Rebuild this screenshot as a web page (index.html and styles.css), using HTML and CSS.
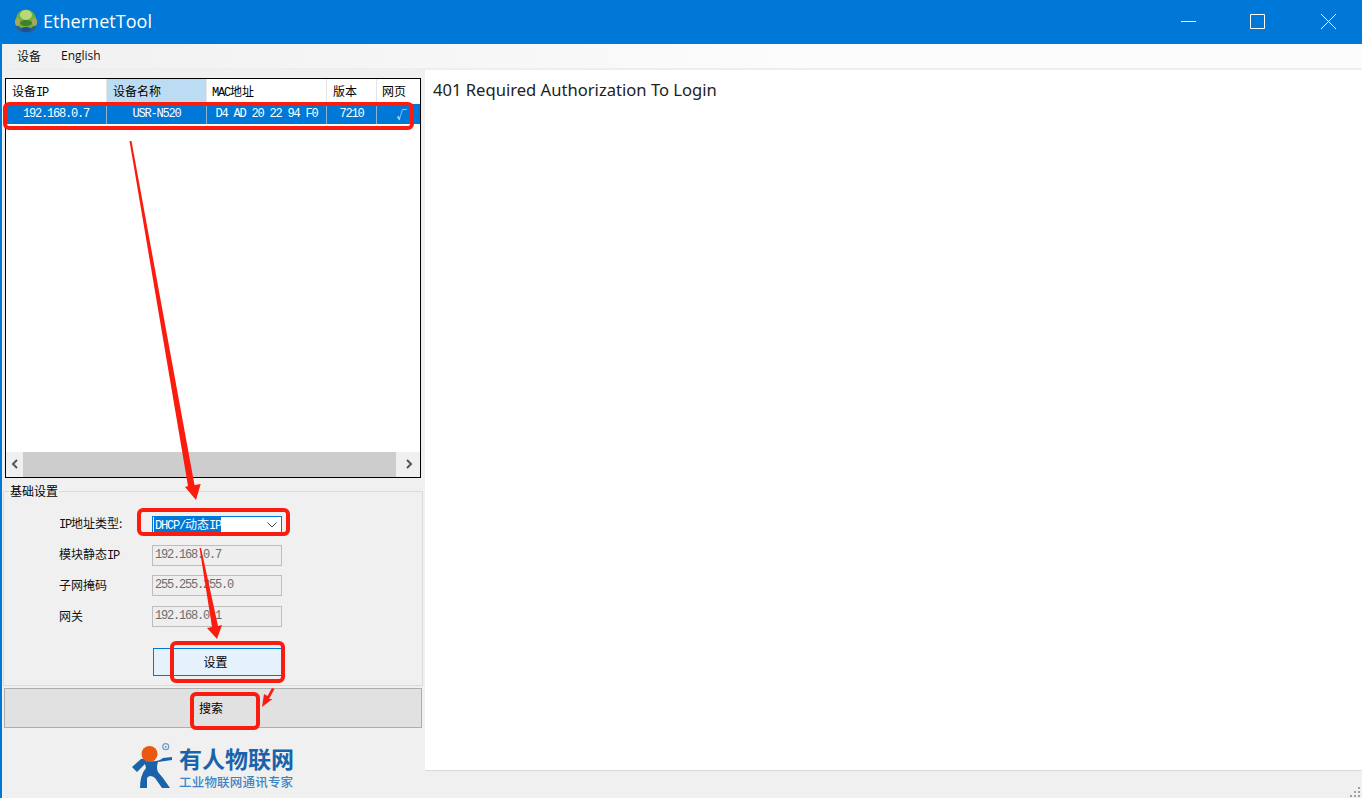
FILE: index.html
```html
<!DOCTYPE html>
<html lang="zh">
<head>
<meta charset="utf-8">
<title>EthernetTool</title>
<link rel="stylesheet" href="styles.css">
</head>
<body>
<div class="app">
  <header class="titlebar">
    <svg class="appicon" viewBox="0 0 24 24" width="24" height="24" aria-hidden="true">
      <ellipse cx="12" cy="18" rx="10" ry="5.5" fill="#2f5f8f"/>
      <circle cx="12" cy="10.5" r="10" fill="#6fae3a"/>
      <ellipse cx="12" cy="6" rx="6" ry="5" fill="#b9d878"/>
      <ellipse cx="12" cy="14" rx="6" ry="3" fill="#3f7f2f"/>
      <ellipse cx="3.5" cy="13" rx="2.5" ry="4" fill="#a8a85a"/>
      <ellipse cx="20.5" cy="13" rx="2.5" ry="4" fill="#a8a85a"/>
      <ellipse cx="12" cy="20.5" rx="5" ry="2.5" fill="#1f4f8f"/>
    </svg>
    <span class="apptitle">EthernetTool</span>
    <div class="winctrls">
      <svg class="winbtn" width="71" height="44" viewBox="0 0 71 44" aria-hidden="true"><path d="M32 21.5h15" stroke="#fff" fill="none"/></svg>
      <svg class="winbtn" width="71" height="44" viewBox="0 0 71 44" aria-hidden="true"><path d="M30.5 14.5h14v14h-14z" stroke="#fff" fill="none"/></svg>
      <svg class="winbtn" width="71" height="44" viewBox="0 0 71 44" aria-hidden="true"><path d="M30 14l15 15M45 14l-15 15" stroke="#fff" fill="none"/></svg>
    </div>
  </header>
  <nav class="menubar">
    <span class="menuitem">设备</span>
    <span class="menuitem">English</span>
  </nav>
  <div class="menuline"></div>
  <main class="main">
    <section class="leftpane">
      <div class="listbox">
        <div class="listrow listhead">
          <div class="cell"><span class="mono">设备<b>IP</b></span></div>
          <div class="cell cell-sorted"><span class="mono">设备名称</span></div>
          <div class="cell cell-tight"><span class="mono"><b>MAC</b>地址</span></div>
          <div class="cell"><span class="mono">版本</span></div>
          <div class="cell cell-tight"><span class="mono">网页</span></div>
        </div>
        <div class="listrow listsel">
          <div class="cell"><b>192.168.0.7</b></div>
          <div class="cell"><b>USR-N520</b></div>
          <div class="cell"><b>D4 AD 20 22 94 F0</b></div>
          <div class="cell"><b>7210</b></div>
          <div class="cell cell-check">√</div>
        </div>
        <div class="listfill"></div>
        <div class="hscroll">
          <svg class="sarrow" width="17" height="25" viewBox="0 0 17 25" aria-hidden="true"><path d="M11 8l-4 4 4 4" stroke="#555" stroke-width="2" fill="none"/></svg>
          <div class="sthumb"></div>
          <svg class="sarrow" width="24" height="25" viewBox="0 0 24 25" aria-hidden="true"><path d="M11 8l4 4-4 4" stroke="#555" stroke-width="2" fill="none"/></svg>
        </div>
      </div>
      <fieldset class="basic">
        <legend class="legend">基础设置</legend>
        <div class="formgrid">
          <label class="flabel"><b>IP</b>地址类型:</label>
          <div class="combo"><span class="combosel"><b>DHCP/</b>动态<b>IP</b></span>
            <svg class="chev" width="10" height="6" viewBox="0 0 10 6" aria-hidden="true"><path d="M.5 .5l4.5 4.5 4.5-4.5" stroke="#444" fill="none"/></svg>
          </div>
          <label class="flabel">模块静态<b>IP</b></label>
          <div class="tbox">192.168.0.7</div>
          <label class="flabel">子网掩码</label>
          <div class="tbox">255.255.255.0</div>
          <label class="flabel">网关</label>
          <div class="tbox">192.168.0.1</div>
        </div>
        <button class="setbtn" type="button">设置</button>
      </fieldset>
      <button class="searchbtn" type="button">搜索</button>
      <div class="logo">
        <svg class="logomark" width="44" height="52" viewBox="130 738 44 52" aria-hidden="true">
          <path d="M172 757v3l-14 2q-2 6 0 10l5 6 7 10h-8l-7-10q-5-4-8 0v10h-7q0-13 6-20l-1-4-8 8-5-5 9-8q4-1 9 2 8 1 13-3z" fill="#1a63ab"/>
          <circle cx="149.5" cy="754" r="8" fill="#e8590f"/>
          <circle cx="165.7" cy="746.7" r="3" fill="none" stroke="#6d9cc8" stroke-width="1.2"/>
          <circle cx="165.7" cy="746.7" r="1" fill="#6d9cc8"/>
        </svg>
        <div class="logotext">
          <div class="logomain">有人物联网</div>
          <div class="logosub">工业物联网通讯专家</div>
        </div>
      </div>
    </section>
    <section class="rightpane">
      <div class="webview">401 Required Authorization To Login</div>
      <footer class="statusbar">
        <svg width="12" height="12" viewBox="0 0 12 12" aria-hidden="true" fill="#a0a0a0">
          <rect x="1" y="9" width="2" height="2"/><rect x="5" y="9" width="2" height="2"/><rect x="9" y="9" width="2" height="2"/>
          <rect x="5" y="5" width="2" height="2"/><rect x="9" y="5" width="2" height="2"/><rect x="9" y="1" width="2" height="2"/>
        </svg>
      </footer>
    </section>
  </main>
  <svg class="marks" width="1362" height="798" viewBox="0 0 1362 798" aria-hidden="true">
    <g fill="none" stroke="#fb1c10" stroke-width="4">
      <rect x="5" y="104" width="407" height="24" rx="4"/>
      <rect x="139" y="510" width="149" height="24" rx="4"/>
      <rect x="172" y="643" width="111" height="38" rx="4"/>
      <rect x="192" y="694" width="66" height="34" rx="4"/>
    </g>
    <g fill="#fb1c10">
      <polygon points="129.5,141 131.5,141 194.5,485 200.7,484 196,500 185,487 188,486"/>
      <polygon points="199.5,548 201,548 218,626 222,625 217,639 207,628 212,627"/>
      <polygon points="272,688 274.5,689 269,699 272.5,699 262,707 264,694 267.5,696"/>
    </g>
  </svg>
</div>
</body>
</html>
```
FILE: styles.css
```css
* { box-sizing: border-box; }
html, body { margin: 0; height: 100%; overflow: hidden; }
body { font-family: "Noto Sans CJK SC", sans-serif; font-size: 12px; color: #000; background: #f0f0f0; }
b { font-family: "Liberation Mono", monospace; font-size: 12px; letter-spacing: -1.2px; font-weight: 400; }

.app { position: relative; display: flex; flex-direction: column; height: 100vh; border-left: 2px solid #0078d7; }

.titlebar { display: flex; align-items: center; height: 44px; flex: none; margin-left: -2px; padding-left: 14px; background: #0078d7; color: #fff; }
.appicon { flex: none; margin-top: -2px; }
.apptitle { margin-left: 5px; font-family: "Open Sans", sans-serif; font-size: 18px; line-height: 24px; margin-top: -3px; letter-spacing: .03px; }
.winctrls { display: flex; margin-left: auto; }
.winbtn { display: block; }

.menubar { display: flex; align-items: center; gap: 20px; height: 24px; flex: none; padding-left: 15px; background: linear-gradient(90deg, #f0f0f0, #fcfcfc 60%); }
.menuitem { line-height: 24px; color: #111; }
.menubar .menuitem:last-child { font-family: "Open Sans", sans-serif; }
.menuline { height: 2px; flex: none; background: #eeeeee; }

.main { display: flex; flex: 1; min-height: 0; }
.leftpane { display: flex; flex-direction: column; width: 423px; flex: none; padding: 8px 0 0 1px; background: #f0f0f0; }
.listbox { display: flex; flex-direction: column; width: 416px; height: 400px; margin-left: 2px; border: 1px solid #000; background: #fff; }
.listrow { display: grid; grid-template-columns: 101px 100px 120px 50px 1fr; flex: none; }
.listhead { height: 25px; }
.listhead .cell { justify-content: flex-start; padding: 0 0 2px 6px; border-right: 1px solid #e5e5e5; }
.listhead .cell-tight { padding-left: 5px; }
.listhead .cell:last-child { border-right: 0; }
.listhead .cell-sorted { background: #bcdcf4; }
.cell { display: flex; align-items: center; justify-content: center; overflow: hidden; white-space: nowrap; }
.listsel { height: 20px; background: #0078d7; color: #fff; }
.listsel .cell { border-right: 1px solid #8fb3cf; }
.listsel .cell:last-child { border-right: 0; }
.cell-check { padding-left: 6px; font-size: 10px; }
.listfill { flex: 1; }
.hscroll { display: flex; flex: none; height: 25px; background: #f0f0f0; }
.sarrow { flex: none; display: block; }
.sthumb { flex: 1; background: #cdcdcd; }

.basic { display: block; flex: none; width: 420px; height: 203px; margin: 5px 0 0 0; padding: 0; border: 1px solid #dcdcdc; }
.legend { margin-left: 5px; padding: 0 1px; font-size: 12px; line-height: 16px; }
.formgrid { display: grid; grid-template-columns: 93px 130px; grid-auto-rows: 21px; row-gap: 9.5px; align-items: center; margin: 15px 0 0 55px; }
.flabel { line-height: 20px; padding-bottom: 1px; color: #111; }
.combo { display: flex; align-items: center; justify-content: space-between; height: 18px; padding: 0 4px 0 1px; background: #fff; border: 1px solid #0078d7; }
.combosel { background: #0078d7; color: #fff; line-height: 15px; padding-left: 1px; width: 67px; white-space: nowrap; }
.tbox { height: 21px; padding-left: 2px; border: 1px solid #bdbdbd; background: #eeeeee; color: #6d6d6d; font-family: "Liberation Mono", monospace; font-size: 12px; letter-spacing: -1.2px; line-height: 19px; }
.setbtn { display: block; width: 130px; height: 28px; margin: 21px 0 0 149px; padding: 0 5px 0 0; background: #e5f1fb; border: 1px solid #0078d7; font: inherit; color: #000; }
.searchbtn { display: block; flex: none; width: 418px; height: 40px; margin: 2px 0 0 1px; padding: 0 4px 2px 0; background: #e1e1e1; border: 1px solid #adadad; font: inherit; color: #000; }

.logo { display: flex; align-items: flex-start; margin: 11px 0 0 127px; }
.logomark { display: block; flex: none; margin-top: -1px; }
.logotext { margin-left: 5px; }
.logomain { font-size: 23px; font-weight: 700; line-height: 27px; color: #1a63ab; white-space: nowrap; margin-top: 6px; }
.logosub { margin-top: 2px; font-size: 12.5px; letter-spacing: .2px; font-weight: 500; line-height: 15px; color: #3d83c4; white-space: nowrap; }

.rightpane { display: flex; flex-direction: column; flex: 1; min-width: 0; }
.webview { flex: 1; padding: 8px 8px; background: #fff; font-family: "Noto Sans", sans-serif; font-size: 16.6px; line-height: 24px; color: #222; }
.statusbar { display: flex; justify-content: flex-end; align-items: flex-end; height: 28px; flex: none; padding: 0 1px 0 0; border-top: 1px solid #dadada; background: #f0f0f0; }
.statusbar svg { display: block; }

.marks { position: absolute; left: -2px; top: 0; pointer-events: none; }
```
